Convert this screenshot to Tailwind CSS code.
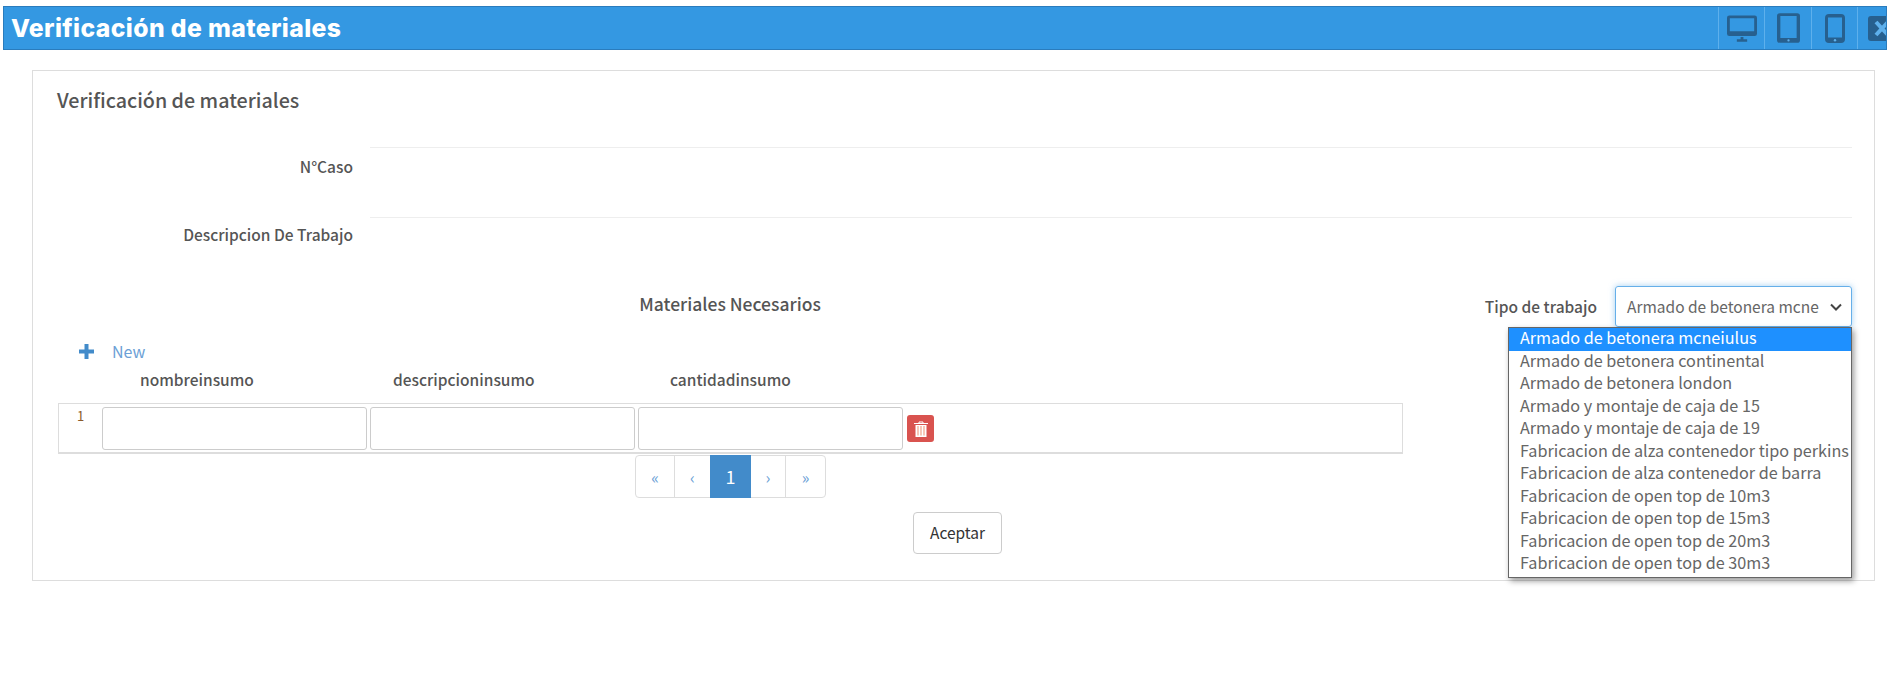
<!DOCTYPE html>
<html lang="es">
<head>
    <meta charset="UTF-8">
    <title>Verificación de materiales</title>
    <script src="https://cdn.jsdelivr.net/npm/@tailwindcss/browser@4"></script>
</head>
<body class="bg-white h-[696px] overflow-hidden font-['Noto_Sans_CJK_SC','Liberation_Sans',sans-serif] text-[#555] text-[16px]">

    <!-- Title bar -->
    <div class="ml-[3px] mt-[6px] h-[44px] bg-[#3498e2] border border-[#2a7cbd] flex items-center justify-between overflow-hidden">
        <h1 class="pl-[7px] pt-[1px] text-white text-[24.700px] tracking-[0.4px] font-extrabold font-['Inter',sans-serif] leading-none">Verificación de materiales</h1>
        <div class="flex h-full shrink-0 w-[168px] text-[#27608f]">
            <div class="w-[46px] shrink-0 flex items-center justify-center border-l border-[#5eb0ec]">
                <svg class="w-[30px] h-[27px]" viewBox="0 0 32 28" fill="currentColor"><path fill-rule="evenodd" d="M2.500 0h27A2.500 2.500 0 0 1 32 2.500v17a2.500 2.500 0 0 1-2.500 2.500h-27A2.500 2.500 0 0 1 0 19.500v-17A2.500 2.500 0 0 1 2.500 0zM3 3v14h26V3z"/><circle cx="16" cy="19.500" r="1"/><path d="M14.500 23h3v2.500h4V28H10.500v-2.500h4z"/></svg>
            </div>
            <div class="w-[47px] shrink-0 flex items-center justify-center border-l border-[#5eb0ec]">
                <svg class="w-[23px] h-[30px]" viewBox="0 0 24 31" fill="currentColor"><path fill-rule="evenodd" d="M3 0h18a3 3 0 0 1 3 3v25a3 3 0 0 1-3 3H3a3 3 0 0 1-3-3V3a3 3 0 0 1 3-3zm.500 3v23h17V3z"/><circle cx="12" cy="28.500" r="1.200" fill="#5eb0ec"/></svg>
            </div>
            <div class="w-[46px] shrink-0 flex items-center justify-center border-l border-[#5eb0ec]">
                <svg class="w-[20px] h-[29px]" viewBox="0 0 20 29" fill="currentColor"><path fill-rule="evenodd" d="M4 0h12a4 4 0 0 1 4 4v21a4 4 0 0 1-4 4H4a4 4 0 0 1-4-4V4a4 4 0 0 1 4-4zM3 3.500v20h14v-20z"/><circle cx="10" cy="26.300" r="1.200" fill="#5eb0ec"/></svg>
            </div>
            <div class="w-[29px] shrink-0 flex items-center pl-[10px] border-l border-[#5eb0ec]">
                <svg class="w-[27px] h-[25px] shrink-0" viewBox="0 0 27 25"><rect width="27" height="25" rx="3" fill="currentColor"/><path d="M8 6l12 13M20 6L8 19" stroke="#5eb0ec" stroke-width="4"/></svg>
            </div>
        </div>
    </div>

    <!-- Card -->
    <div class="relative ml-[32px] mt-[20px] w-[1843px] h-[511px] border border-[#ddd] pt-[14px] pl-[24px] pr-[22px]">
        <h2 class="text-[19.700px] leading-[30px] font-medium text-[#555]">Verificación de materiales</h2>

        <div class="mt-[32px] h-[70px] flex">
            <label class="w-[313px] pr-[17px] pt-[8px] text-right text-[15.500px] font-medium leading-[22px]">N°Caso</label>
            <div class="flex-1 border-t border-[#eee]"></div>
        </div>
        <div class="h-[70px] flex">
            <label class="w-[313px] pr-[17px] pt-[6px] text-right text-[15.500px] font-medium leading-[22px]">Descripcion De Trabajo</label>
            <div class="flex-1 border-t border-[#eee]"></div>
        </div>

        <div class="-mt-[2px] flex items-start">
            <div class="w-[1345px] pl-[1px]">
                <h3 class="text-center text-[17.500px] font-medium leading-[26px] h-[26px] mt-[6px] -ml-[1px] pl-[1px]">Materiales Necesarios</h3>
                <a class="mt-[22px] ml-[21px] h-[24px] flex items-center text-[#428bca]">
                    <svg class="w-[15px] h-[15px]" viewBox="0 0 15 15" fill="#428bca"><path d="M5.500 0h4v5.500H15v4H9.500V15h-4V9.500H0v-4h5.500z"/></svg>
                    <span class="ml-[18px] text-[#6c9fd6]">New</span>
                </a>
                <div class="flex h-[26px] text-[15.500px] font-medium leading-[26px] mt-[3px]">
                    <span class="ml-[82px] w-[253px]">nombreinsumo</span>
                    <span class="w-[277px]">descripcioninsumo</span>
                    <span>cantidadinsumo</span>
                </div>
                <!-- Row -->
                <div class="mt-[11px] w-[1345px] h-[51px] border border-[#ddd] border-b-2 flex items-start pt-[3px]">
                    <span class="w-[43px] pl-[18px] text-[13px] leading-[16px] pt-[1px] text-[#8a5a2b]">1</span>
                    <div class="w-[265px] h-[43px] border border-[#ccc] rounded-[3px]"></div>
                    <div class="ml-[3px] w-[265px] h-[43px] border border-[#ccc] rounded-[3px]"></div>
                    <div class="ml-[3px] w-[265px] h-[43px] border border-[#ccc] rounded-[3px]"></div>
                    <button class="ml-[4px] mt-[8px] w-[27px] h-[27px] bg-[#d9534f] rounded-[3px] flex items-center justify-center">
                        <svg class="w-[14px] h-[16px]" viewBox="0 0 14 16"><path d="M0 2.500h14M5 2.500V1h4v1.500" stroke="#fff" stroke-width="1" fill="none"/><path d="M1.500 4h11v12h-11z" fill="#fff"/><path d="M4 5v9.500M7 5v9.500M10 5v9.500" stroke="#f0a58a" stroke-width="1.200"/></svg>
                    </button>
                </div>
                <!-- Pager -->
                <div class="mt-[1px] ml-[577px] w-fit h-[43px] flex border border-[#ddd] rounded-[4px] text-[#6c9fd6] text-[16px]">
                    <span class="w-[39px] flex items-center justify-center border-r border-[#ddd]">«</span>
                    <span class="w-[35px] flex items-center justify-center">‹</span>
                    <span class="w-[41px] -my-px flex items-center justify-center bg-[#428bca] text-white text-[18px]">1</span>
                    <span class="w-[35px] flex items-center justify-center border-r border-[#ddd]">›</span>
                    <span class="w-[39px] flex items-center justify-center">»</span>
                </div>
                <button class="block mt-[14px] ml-[855px] w-[89px] h-[42px] border border-[#ccc] rounded-[4px] text-[15.500px] text-[#333] bg-white">Aceptar</button>
            </div>
            <div class="flex-1 flex items-center justify-end mt-[1px]">
                <span class="font-medium text-[15.500px] mr-[18px]">Tipo de trabajo</span>
                <div class="w-[237px] h-[41px] border border-[#66afe9] rounded-[3px] shadow-[0_0_6px_rgba(102,175,233,0.6)] flex items-center justify-between pl-[11px] pr-[9px]">
                    <span class="text-[15.500px] text-[#666] whitespace-nowrap">Armado de betonera mcne</span>
                    <svg class="w-[12px] h-[8px] shrink-0" viewBox="0 0 12 8" fill="none" stroke="#444" stroke-width="2"><path d="M1 1.500l5 5 5-5"/></svg>
                </div>
            </div>
        </div>

        <!-- Open select list -->
        <ul class="absolute left-[1475px] top-[256px] w-[344px] h-[251px] border border-[#666] bg-white shadow-[2px_3px_6px_rgba(0,0,0,0.4)] text-[16.200px] whitespace-nowrap text-[#666]">
            <li class="h-[22.500px] leading-[18px] pl-[11px] bg-[#1e90ff] text-white">Armado de betonera mcneiulus</li>
            <li class="h-[22.500px] leading-[18px] pl-[11px]">Armado de betonera continental</li>
            <li class="h-[22.500px] leading-[18px] pl-[11px]">Armado de betonera london</li>
            <li class="h-[22.500px] leading-[18px] pl-[11px]">Armado y montaje de caja de 15</li>
            <li class="h-[22.500px] leading-[18px] pl-[11px]">Armado y montaje de caja de 19</li>
            <li class="h-[22.500px] leading-[18px] pl-[11px]">Fabricacion de alza contenedor tipo perkins</li>
            <li class="h-[22.500px] leading-[18px] pl-[11px]">Fabricacion de alza contenedor de barra</li>
            <li class="h-[22.500px] leading-[18px] pl-[11px]">Fabricacion de open top de 10m3</li>
            <li class="h-[22.500px] leading-[18px] pl-[11px]">Fabricacion de open top de 15m3</li>
            <li class="h-[22.500px] leading-[18px] pl-[11px]">Fabricacion de open top de 20m3</li>
            <li class="h-[22.500px] leading-[18px] pl-[11px]">Fabricacion de open top de 30m3</li>
        </ul>
    </div>
</body>
</html>
